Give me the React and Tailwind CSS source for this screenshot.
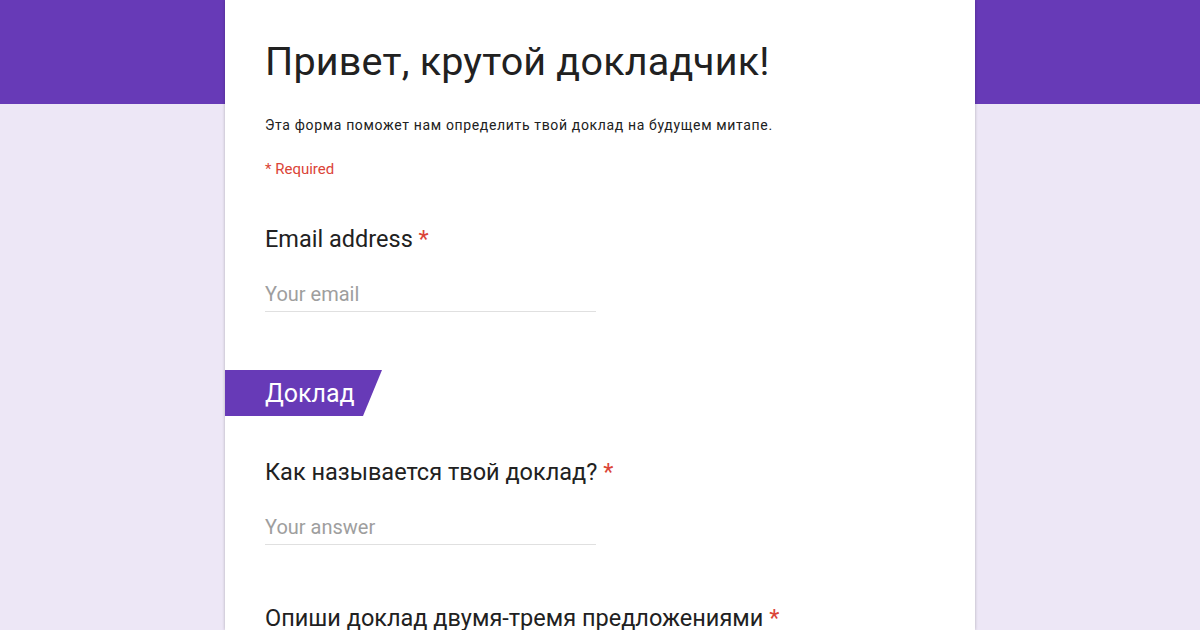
export default function App() {
  const font = { fontFamily: "Roboto, 'Noto Sans', sans-serif" };
  return (
    <div
      className="w-[1200px] h-[630px] overflow-hidden bg-[linear-gradient(to_bottom,#673ab7_0,#673ab7_104px,#ede7f6_104px)]"
      style={font}
    >
      <div className="mx-auto w-[750px] h-[630px] bg-white shadow-[0_0_3px_rgba(0,0,0,0.25)] flex flex-col">
        <div className="px-10 pt-[38px]">
          <h1 className="text-[39.5px] leading-[48px] text-[#212121] font-normal tracking-[0.2px] whitespace-nowrap">
            Привет, крутой докладчик!
          </h1>
          <p className="mt-[29px] text-[14px] leading-[20px] text-[#212121] tracking-[0.65px] whitespace-nowrap">
            Эта форма поможет нам определить твой доклад на будущем митапе.
          </p>
          <p className="mt-[24px] text-[15px] leading-[20px] text-[#db4437]">* Required</p>
        </div>

        <div className="px-10 pt-[46px]">
          <div className="text-[23.5px] leading-[28px] text-[#212121] whitespace-nowrap">
            Email address <span className="text-[#db4437]">*</span>
          </div>
          <div className="mt-[28px] w-[331px] border-b border-[#e0e0e0] pb-[4px] text-[20px] leading-[26px] text-[#9e9e9e]">
            Your email
          </div>
        </div>

        <div className="mt-[58px] w-[157px] h-[46px] shrink-0 bg-[#673ab7] [clip-path:polygon(0_0,100%_0,calc(100%-19px)_100%,0_100%)] flex items-center pl-10">
          <span className="text-[25px] text-white leading-none">Доклад</span>
        </div>

        <div className="px-10 pt-[42px]">
          <div className="text-[23.5px] leading-[28px] text-[#212121] whitespace-nowrap">
            Как называется твой доклад? <span className="text-[#db4437]">*</span>
          </div>
          <div className="mt-[28px] w-[331px] border-b border-[#e0e0e0] pb-[4px] text-[20px] leading-[26px] text-[#9e9e9e]">
            Your answer
          </div>
        </div>

        <div className="px-10 pt-[59px]">
          <div className="text-[23.5px] leading-[28px] text-[#212121] whitespace-nowrap">
            Опиши доклад двумя-тремя предложениями <span className="text-[#db4437]">*</span>
          </div>
        </div>
      </div>
    </div>
  );
}
